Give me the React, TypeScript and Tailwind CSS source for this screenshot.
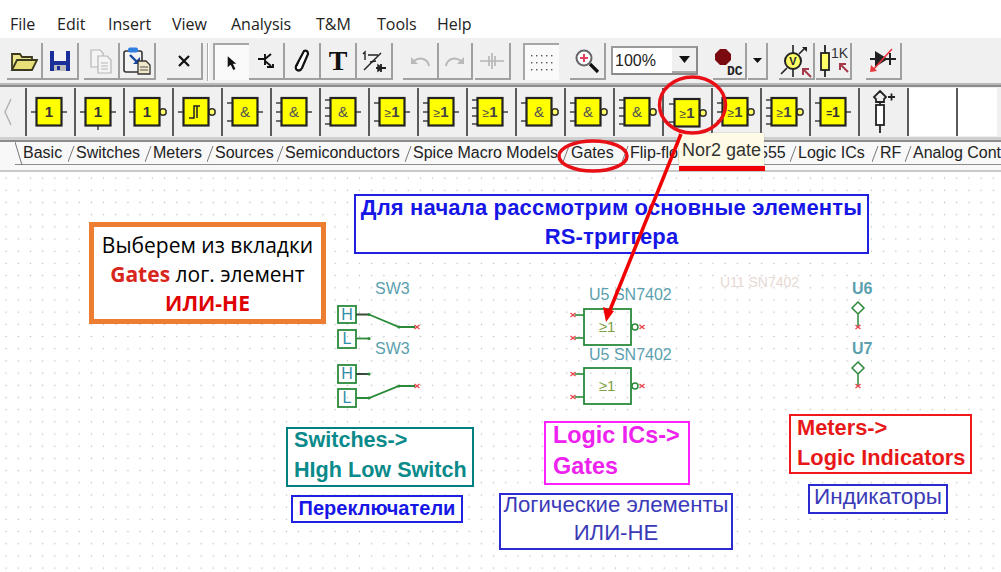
import React from "react";

const sans = "font-['Liberation_Sans',Arial,sans-serif]";

function Btn({ className = "", pressed = false, children }: { className?: string; pressed?: boolean; children?: React.ReactNode }) {
  return (
    <div
      className={
        "h-[37px] flex items-center justify-center shrink-0 " +
        (pressed
          ? "bg-[#fafafa] border-t-2 border-l-2 border-[#a6a6a6] "
          : "bg-[#f0f0f0] border-b-2 border-r-2 border-[#a0a0a0] ") +
        className
      }
    >
      {children}
    </div>
  );
}

function Gate({ label, inputs, bubble = false, schmitt = false, pin = false, hover = false }: { label: string; inputs: number; bubble?: boolean; schmitt?: boolean; pin?: boolean; hover?: boolean }) {
  const ys: Record<number, number[]> = { 1: [24], 2: [15, 33], 3: [15, 24, 33], 4: [12, 20, 28, 36] };
  const dx = hover ? 1 : 0;
  const dy = hover ? 1 : 0;
  return (
    <svg width="47" height="48" viewBox="2 0 47 48" className="block">
      <g transform={`translate(${dx} ${dy})`}>
        {ys[inputs].map((y) => (
          <line key={y} x1="6" x2="12" y1={y} y2={y} stroke="#333" strokeWidth="1.4" />
        ))}
        {bubble ? (
          <circle cx="40" cy="24" r="3.2" fill="#ffff66" stroke="#333" strokeWidth="1.5" />
        ) : (
          <line x1="37" x2="42" y1="24" y2="24" stroke="#333" strokeWidth="1.4" />
        )}
        {pin && <line x1="24" x2="24" y1="38" y2="42" stroke="#333" strokeWidth="1.4" />}
        <rect x="11.5" y="10" width="25" height="27.5" fill="#ffff00" stroke="#222" strokeWidth="2.2" />
        {schmitt ? (
          <path d="M17 30h5V18h6M22 30V18M25 30V18" fill="none" stroke="#222" strokeWidth="1.5" />
        ) : label === "&" ? (
          <text x="24" y="29" textAnchor="middle" fontFamily="Liberation Sans" fontSize="15" fill="#555">&amp;</text>
        ) : label === "≥1" ? (
          <text x="24" y="29" textAnchor="middle" fontFamily="Liberation Sans" fill="#444">
            <tspan fontSize="12">≥</tspan>
            <tspan fontSize="15" fontWeight="700">1</tspan>
          </text>
        ) : label === "=1" ? (
          <text x="24" y="29" textAnchor="middle" fontFamily="Liberation Sans" fontWeight="700" fill="#333">
            <tspan fontSize="10">=</tspan>
            <tspan fontSize="14">1</tspan>
          </text>
        ) : (
          <text x="24" y="29" textAnchor="middle" fontFamily="Liberation Sans" fontSize="15" fontWeight="700" fill="#333">1</text>
        )}
      </g>
    </svg>
  );
}

const gates = [
  { label: "1", inputs: 1 },
  { label: "1", inputs: 1, pin: true },
  { label: "1", inputs: 1, bubble: true },
  { label: "1", inputs: 1, bubble: true, schmitt: true },
  { label: "&", inputs: 2 },
  { label: "&", inputs: 3 },
  { label: "&", inputs: 4 },
  { label: "≥1", inputs: 2 },
  { label: "≥1", inputs: 3 },
  { label: "≥1", inputs: 4 },
  { label: "&", inputs: 2, bubble: true },
  { label: "&", inputs: 3, bubble: true },
  { label: "&", inputs: 4, bubble: true },
  { label: "≥1", inputs: 2, bubble: true, hover: true },
  { label: "≥1", inputs: 3, bubble: true },
  { label: "≥1", inputs: 4, bubble: true },
  { label: "=1", inputs: 2 },
];

const tabs = [
  { t: "Basic", w: "w-[53px]", active: true },
  { t: "Switches", w: "w-[77px]" },
  { t: "Meters", w: "w-[62px]" },
  { t: "Sources", w: "w-[70px]" },
  { t: "Semiconductors", w: "w-[128px]" },
  { t: "Spice Macro Models", w: "w-[158px]" },
  { t: "Gates", w: "w-[59px]" },
  { t: "Flip-flops", w: "w-[129px]" },
  { t: "555", w: "w-[39px]" },
  { t: "Logic ICs", w: "w-[82px]" },
  { t: "RF", w: "w-[33px]" },
  { t: "Analog Controls", w: "w-[130px]" },
];

const menu = [
  { t: "File", w: "w-[47px]" },
  { t: "Edit", w: "w-[51px]" },
  { t: "Insert", w: "w-[64px]" },
  { t: "View", w: "w-[59px]" },
  { t: "Analysis", w: "w-[85px]" },
  { t: "T&M", w: "w-[61px]" },
  { t: "Tools", w: "w-[60px]" },
  { t: "Help", w: "w-[50px]" },
];

function RedX({ x, y }: { x: number; y: number }) {
  return <path d={`M${x - 2.5} ${y - 2}l5 4M${x - 2.5} ${y + 2}l5 -4`} stroke="#e8434a" strokeWidth="1.3" fill="none" />;
}

function Schematic() {
  const g = "#2a8a3a";
  const lbl = "#5b9fae";
  const gateAt = (y: number) => (
    <g key={y}>
      <line x1="575" x2="584" y1={y + 6} y2={y + 6} stroke={g} strokeWidth="1.6" />
      <line x1="575" x2="584" y1={y + 29} y2={y + 29} stroke={g} strokeWidth="1.6" />
      <RedX x={573} y={y + 6} />
      <RedX x={573} y={y + 29} />
      <rect x="584" y={y} width="47" height="36" fill="none" stroke={g} strokeWidth="1.8" />
      <text x="607" y={y + 23} textAnchor="middle" fontFamily="Liberation Sans" fontSize="15" fill="#7f9f45">≥1</text>
      <circle cx="635" cy={y + 18} r="3" fill="none" stroke={g} strokeWidth="1.5" />
      <RedX x={642} y={y + 18} />
    </g>
  );
  return (
    <svg width="1001" height="400" viewBox="0 172 1001 400" className="absolute left-0 top-0">
      <g fontFamily="Liberation Sans" fontSize="16" fill={lbl}>
        <text x="375" y="294">SW3</text>
        <text x="375" y="354">SW3</text>
        <text x="589" y="300">U5 SN7402</text>
        <text x="589" y="360">U5 SN7402</text>
        <text x="852" y="294" fontWeight="700">U6</text>
        <text x="852" y="354" fontWeight="700">U7</text>
      </g>
      <text x="720" y="287" fontFamily="Liberation Sans" fontSize="14" fill="#e7d9d4">U11 SN7402</text>

      <g fill="none" stroke={g} strokeWidth="1.8">
        <rect x="338" y="306" width="18" height="17" />
        <rect x="338" y="330" width="18" height="18" />
        <rect x="338" y="365" width="18" height="18" />
        <rect x="338" y="389" width="18" height="18" />
        <path d="M356 338.5h12" />
        <path d="M369 314.5L399 327h16" />
        <path d="M356 398h13L399 386h16" />
      </g>
      <path d="M356 314.5h13M356 374h13" stroke="#3a4a3a" strokeWidth="1.8" fill="none" />
      <g fill={g}>
        <circle cx="369" cy="314.5" r="1.6" />
        <circle cx="399" cy="327" r="1.6" />
        <circle cx="369" cy="338.5" r="1.6" />
        <circle cx="369" cy="374" r="1.6" />
        <circle cx="369" cy="398" r="1.6" />
        <circle cx="399" cy="386" r="1.6" />
      </g>
      <RedX x={417} y={327} />
      <RedX x={417} y={386} />
      <g fontFamily="Liberation Sans" fontSize="16" fill="#2f8fa8" textAnchor="middle">
        <text x="347" y="320">H</text>
        <text x="347" y="344">L</text>
        <text x="347" y="379">H</text>
        <text x="347" y="403">L</text>
      </g>
      {gateAt(309)}
      {gateAt(368)}
      <path d="M858 302l6 6-6 6-6-6zM858 314v13" fill="none" stroke={g} strokeWidth="1.5" />
      <path d="M858 362l6 6-6 6-6-6zM858 374v12" fill="none" stroke={g} strokeWidth="1.5" />
      <RedX x={858} y={327} />
      <RedX x={858} y={386} />
    </svg>
  );
}

export default function App() {
  return (
    <div className={"relative w-[1001px] h-[572px] overflow-hidden bg-white " + sans}>
      {/* menu */}
      <div className="flex h-[38px] items-end pb-[3px] pl-[10px] font-['Open_Sans',sans-serif] text-[16px] leading-[22px] text-[#222]">
        {menu.map((m) => (
          <span key={m.t} className={m.w + " shrink-0"}>{m.t}</span>
        ))}
      </div>

      {/* main toolbar */}
      <div className="flex h-[47px] items-start bg-[#f0f0f0] pl-[7px] pt-[5px] border-b-2 border-[#b8b8b8]">
        <Btn className="w-[36px]">
          <svg width="28" height="24" viewBox="0 0 28 24"><path d="M2 20V5h8l2 3h10v4" fill="#ece58c" stroke="#3a3a20" strokeWidth="1.8" /><path d="M2 21l5-10h20l-5 10z" fill="#e8df7a" stroke="#3a3a20" strokeWidth="1.8" /></svg>
        </Btn>
        <Btn className="w-[36px]">
          <svg width="22" height="22" viewBox="0 0 22 22"><path d="M1 1h20v20H1z" fill="#1a2f9a" /><rect x="5" y="1" width="12" height="10" fill="#f4f4f4" /><rect x="5" y="15" width="12" height="6" fill="#bbb" /><rect x="8" y="16" width="3" height="4" fill="#1a2f9a" /></svg>
        </Btn>
        <Btn className="w-[36px] ml-[5px]">
          <svg width="24" height="26" viewBox="0 0 24 26" fill="#f4f4f4" stroke="#b5b5b5" strokeWidth="1.2"><path d="M2 2h9l3 3v14H2z" /><path d="M9 8h9l4 4v13H9z" /><path d="M12 15h7M12 18h7M12 21h7" /></svg>
        </Btn>
        <Btn className="w-[36px]">
          <svg width="30" height="28" viewBox="0 0 30 28"><rect x="2" y="4" width="18" height="21" rx="2" fill="#f4f4f4" stroke="#333" strokeWidth="1.6" /><rect x="6" y="0.5" width="10" height="5" rx="2" fill="#2f7fe0" /><path d="M8 8l8 8" stroke="#17479e" strokeWidth="2.4" /><path d="M11 17h7v-7z" fill="#17479e" /><path d="M16 14h8l4 4v9H16z" fill="#f0e8c8" stroke="#333" strokeWidth="1.3" /><path d="M18 20h8M18 23h8" stroke="#555" /></svg>
        </Btn>
        <Btn className="w-[36px] ml-[11px]">
          <svg width="14" height="14" viewBox="0 0 14 14"><path d="M2 2l10 10M12 2L2 12" stroke="#111" strokeWidth="2.2" /></svg>
        </Btn>
        <div className="ml-[4px] mr-[4px] h-[38px] w-[2px] shrink-0 border-l border-[#a9a9a9] bg-white" />
        <Btn pressed className="w-[36px]">
          <svg width="12" height="16" viewBox="0 0 14 18"><path d="M2 1l10 9H8l3 6-2.5 1.2L5.5 11 2 14z" fill="#111" /></svg>
        </Btn>
        <Btn className="w-[36px]">
          <svg width="20" height="20" viewBox="0 0 20 20" fill="none" stroke="#111" strokeWidth="1.9"><path d="M2 8h7M9 3v11M9 8l6-5M9 10l6 5" /><path d="M11 16h6v-3" /></svg>
        </Btn>
        <Btn className="w-[36px]">
          <svg width="16" height="24" viewBox="0 0 16 24" fill="#fff" stroke="#111" strokeWidth="2.2"><path d="M10 2c2-1 4 0 4 3l-6 14c-1 2-3 3-5 2s-1-3-1-4z" /><path d="M6 9l-3 8" strokeWidth="1.2" /></svg>
        </Btn>
        <Btn className="w-[36px]">
          <span className="font-['Liberation_Serif',serif] text-[28px] font-bold leading-none text-[#111]">T</span>
        </Btn>
        <Btn className="w-[36px]">
          <svg width="26" height="24" viewBox="0 0 26 24" fill="none" stroke="#222" strokeWidth="1.4"><path d="M2 5l2-2v8" /><path d="M3 21L20 4" /><path d="M7 6h10M9 13l6-1" /><path d="M15 19h10M20 15v8" strokeWidth="1.8" /><path d="M17 16l4 3-4 3z" fill="#222" /></svg>
        </Btn>
        <Btn className="w-[36px] ml-[10px]">
          <svg width="22" height="16" viewBox="0 0 22 16" fill="none" stroke="#b9b9b9" strokeWidth="2"><path d="M20 13c-1-7-9-10-15-5" /><path d="M2 4v7h7z" fill="#b9b9b9" stroke="none" /></svg>
        </Btn>
        <Btn className="w-[34px]">
          <svg width="22" height="16" viewBox="0 0 22 16" fill="none" stroke="#b9b9b9" strokeWidth="2"><path d="M2 13c1-7 9-10 15-5" /><path d="M20 4v7h-7z" fill="#b9b9b9" stroke="none" /></svg>
        </Btn>
        <Btn className="w-[36px] ml-[2px]">
          <svg width="24" height="18" viewBox="0 0 24 18" fill="none" stroke="#b5b5b5" strokeWidth="1.6"><path d="M0 9h24M12 1v16M9 4v10M15 4v10" /></svg>
        </Btn>
        <Btn pressed className="w-[36px] ml-[12px]">
          <svg width="22" height="18" viewBox="0 0 22 18" fill="#555"><g>{[0, 7, 14].map((y) => [0, 5, 10, 15, 20].map((x) => <rect key={x + "-" + y} x={x} y={y + 1} width="1.4" height="1.4" />))}</g></svg>
        </Btn>
        <Btn className="w-[36px] ml-[11px]">
          <svg width="26" height="26" viewBox="0 0 26 26" fill="none"><circle cx="10" cy="10" r="7.5" fill="#fff" stroke="#666" strokeWidth="2" /><path d="M6 10h8M10 6v8" stroke="#e0405a" strokeWidth="2" /><path d="M16 16l8 8" stroke="#111" strokeWidth="3.2" /></svg>
        </Btn>
        <div className="ml-[5px] mt-[3px] flex h-[29px] w-[87px] shrink-0 items-center border-2 border-t-[#9a9a9a] border-l-[#9a9a9a] border-r-[#8a8a8a] border-b-[#8a8a8a] bg-white">
          <span className="flex-1 pl-[2px] text-[16px] text-[#222]">100%</span>
          <div className="flex h-full w-[24px] items-center justify-center border-b-2 border-[#a9a9a9] bg-[#f0f0f0]">
            <svg width="11" height="7" viewBox="0 0 11 7"><path d="M0 0h11L5.5 7z" fill="#111" /></svg>
          </div>
        </div>
        <Btn className="w-[34px] ml-[15px]">
          <svg width="32" height="34" viewBox="0 0 32 34"><path d="M7 5h6l5 5v6l-5 5H7l-5-5v-6z" fill="#7a0a10" /><text x="14" y="31" fontFamily="Liberation Mono" fontSize="13" fontWeight="700" fill="#222">DC</text></svg>
        </Btn>
        <Btn className="w-[20px] ml-[1px]">
          <svg width="9" height="5" viewBox="0 0 9 5"><path d="M0 0h9L4.5 5z" fill="#111" /></svg>
        </Btn>
        <Btn className="w-[36px] ml-[11px]">
          <svg width="34" height="34" viewBox="0 0 34 34" fill="none"><circle cx="14" cy="17" r="8" fill="#ffff66" stroke="#222" strokeWidth="2" /><path d="M14 1v8M14 25v8M8 24l-6 6M20 10l6-6" stroke="#222" strokeWidth="1.6" /><path d="M23 3h5v5z" fill="#222" /><text x="14" y="21" textAnchor="middle" fontFamily="Liberation Sans" fontSize="11" fontWeight="700" fill="#222">V</text><path d="M32 33l-8-8M24 31v-6h6" stroke="#a33a4a" strokeWidth="2" fill="none" /></svg>
        </Btn>
        <Btn className="w-[36px] ml-[1px]">
          <svg width="34" height="34" viewBox="0 0 34 34" fill="none"><path d="M9 1v8M9 26v7" stroke="#222" strokeWidth="1.8" /><rect x="5" y="9" width="8" height="17" fill="#ffff66" stroke="#222" strokeWidth="1.8" /><text x="15" y="14" fontFamily="Liberation Sans" fontSize="14" fill="#333">1K</text><path d="M32 28l-8-8M24 26v-6h6" stroke="#a33a4a" strokeWidth="2" /></svg>
        </Btn>
        <Btn className="w-[36px] ml-[14px]">
          <svg width="30" height="28" viewBox="0 0 30 28" fill="none"><path d="M2 12h26M22 6v12" stroke="#222" strokeWidth="2" /><path d="M7 4v16l13-8z" fill="#222" /><path d="M24 2L4 24" stroke="#e8353c" strokeWidth="1.6" /><path d="M2 25l1-7 6 6z" fill="#e8353c" /></svg>
        </Btn>
      </div>

      {/* gate toolbar */}
      <div className="flex h-[55px] items-center bg-[#f0f0f0] border-t-2 border-[#8c8c8c] border-b-[3px] border-b-[#d0d0d0]">
        <div className="flex h-[48px] w-[25px] shrink-0 items-center justify-center pr-[10px]">
          <svg width="10" height="30" viewBox="0 0 10 30"><path d="M8 2L2 15l6 13" fill="none" stroke="#b0b0b0" strokeWidth="1.4" /></svg>
        </div>
        {gates.map((g, i) => (
          <div key={i} className="h-[48px] w-[49px] shrink-0 border-l-2 border-[#5a5a5a]">
            <Gate {...g} />
          </div>
        ))}
        <div className="flex h-[48px] w-[49px] shrink-0 items-center justify-center border-l-2 border-[#5a5a5a]">
          <svg width="30" height="46" viewBox="0 0 30 46" fill="none" stroke="#222" strokeWidth="1.8"><path d="M11 2l6 6-2 2v3h-8v-3l-2-2z" fill="#eee" /><rect x="7" y="16" width="8" height="20" fill="#fff" /><path d="M11 13v3M11 36v8" /><path d="M19 8h7M22.5 4.5v7" /></svg>
        </div>
        <div className="h-[48px] w-[49px] shrink-0 border-l-2 border-[#5a5a5a] bg-white" />
        <div className="h-[48px] w-[41px] shrink-0 border-l-2 border-[#5a5a5a] bg-white" />
      </div>

      {/* tabs */}
      <div className="flex h-[32px] overflow-hidden border-t-2 border-[#8c8c8c] border-b-2 border-b-[#c8c8c8] bg-[#f8f8f8] pl-[15px] text-[16px] leading-[22px] text-[#222]">
        {tabs.map((tab) => (
          <div key={tab.t} className={tab.w + " flex h-[23px] shrink-0 items-start border-b border-[#8c8c8c]"}>
            <svg width="8" height="23" viewBox="0 0 8 23" className="shrink-0">
              <path d={tab.active ? "M0 0l7 23" : "M0 20L6 4"} stroke="#777" strokeWidth="1" fill="none" />
            </svg>
            <span className="whitespace-nowrap">{tab.t}</span>
          </div>
        ))}
      </div>

      {/* canvas */}
      <div className="relative h-[400px] bg-[radial-gradient(circle,#bdbdbd_0.7px,transparent_1px)] bg-[size:12.2px_12.2px]">
        <Schematic />
        <div className="absolute left-[89px] top-[50px] flex h-[102px] w-[237px] flex-col items-center border-[5px] border-[#ed7d31] bg-white pt-[4px] font-['Open_Sans',sans-serif] text-[21px] leading-[29px] text-black whitespace-nowrap">
          <span>Выберем из вкладки</span>
          <span><b className="text-[#d9261c]">Gates</b> лог. элемент</span>
          <b className="text-[#e00000]">ИЛИ-НЕ</b>
        </div>
        <div className="absolute left-[354px] top-[22px] flex h-[60px] w-[515px] flex-col items-center justify-center border-2 border-[#2020e0] bg-white pb-[4px] text-[22px] font-bold leading-[29px] tracking-[0.17px] text-[#1616e6]">
          <span className="whitespace-nowrap">Для начала рассмотрим основные элементы</span>
          <span>RS-триггера</span>
        </div>
        <div className="absolute left-[286px] top-[255px] flex h-[60px] w-[188px] flex-col justify-center border-2 border-[#008080] bg-white pb-[4px] pl-[6px] text-[21.6px] font-bold leading-[30px] text-[#0a8a8a]">
          <span>Switches-&gt;</span>
          <span className="whitespace-nowrap">HIgh Low Switch</span>
        </div>
        <div className="absolute left-[291px] top-[323px] flex h-[28px] w-[172px] items-center justify-center border-2 border-[#2020e0] bg-white pb-[2px] text-[20px] font-bold text-[#1616e6]">
          Переключатели
        </div>
        <div className="absolute left-[544px] top-[249px] flex h-[64px] w-[146px] flex-col justify-center border-2 border-[#ff20ff] bg-white pb-[4px] pl-[7px] text-[23.4px] font-bold leading-[31px] text-[#ee22ee]">
          <span className="whitespace-nowrap">Logic ICs-&gt;</span>
          <span>Gates</span>
        </div>
        <div className="absolute left-[499px] top-[321px] flex h-[57px] w-[234px] flex-col items-center justify-center border-2 border-[#2a2ad0] bg-white pb-[5px] text-[22.2px] leading-[28px] text-[#3a3ab8]">
          <span className="whitespace-nowrap">Логические элементы</span>
          <span>ИЛИ-НЕ</span>
        </div>
        <div className="absolute left-[789px] top-[242px] flex h-[60px] w-[183px] flex-col justify-center border-2 border-[#f01818] bg-white pb-[3px] pl-[6px] text-[21.8px] font-bold leading-[30px] text-[#e81818]">
          <span>Meters-&gt;</span>
          <span className="whitespace-nowrap">Logic Indicators</span>
        </div>
        <div className="absolute left-[808px] top-[312px] flex h-[30px] w-[140px] items-center justify-center border-2 border-[#2a2ad0] bg-white pb-[5px] text-[22.5px] text-[#3a3ab8]">
          Индикаторы
        </div>
      </div>

      {/* tooltip over the tabs */}
      <div className="absolute left-[679px] top-[133px] flex h-[32px] w-[85px] items-center justify-center bg-[#fffbe6] pt-[2px] text-[18px] text-[#333] shadow-[0_0_1px_#999] whitespace-nowrap">
        Nor2 gate
      </div>
      <div className="absolute left-[679px] top-[166px] h-[5px] w-[86px] bg-[#f00000]" />

      {/* red annotations */}
      <svg width="1001" height="572" viewBox="0 0 1001 572" className="pointer-events-none absolute left-0 top-0">
        <ellipse cx="692.5" cy="105" rx="33" ry="28" fill="none" stroke="#e80f17" strokeWidth="3.5" />
        <ellipse cx="593" cy="156" rx="34" ry="15" fill="none" stroke="#e80f17" strokeWidth="3.5" />
        <path d="M681 134L610 310" stroke="#f00000" strokeWidth="3.5" fill="none" />
        <path d="M606 322l-3-15 11 4z" fill="#f00000" />
      </svg>
    </div>
  );
}
